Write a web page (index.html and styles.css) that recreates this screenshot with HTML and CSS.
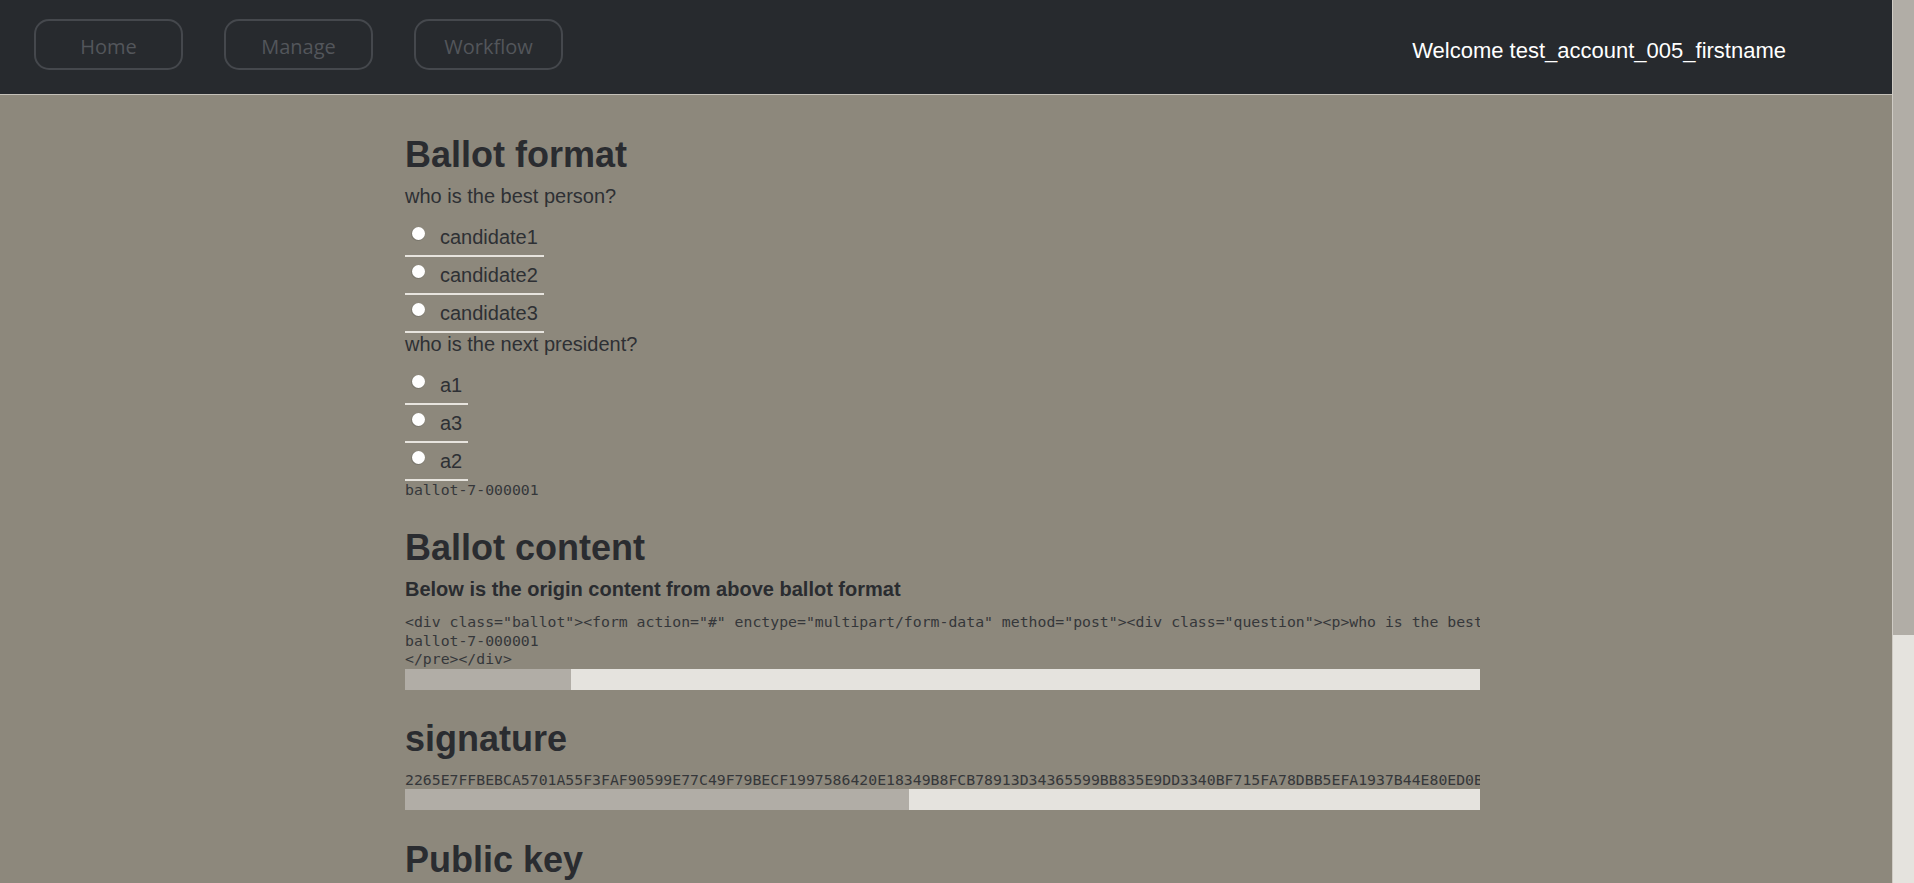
FILE: index.html
```html
<!DOCTYPE html>
<html lang="en">
<head>
<meta charset="utf-8">
<title>Ballot</title>
<link rel="stylesheet" href="styles.css">
</head>
<body>
<div class="app">
  <header class="topbar">
    <nav class="nav">
      <a class="nav-btn" href="#">Home</a>
      <a class="nav-btn" href="#">Manage</a>
      <a class="nav-btn" href="#">Workflow</a>
    </nav>
    <div class="welcome">Welcome test_account_005_firstname</div>
  </header>
  <main class="page">
    <div class="container">
      <section class="section">
        <h1 class="title title-tight">Ballot format</h1>
        <div class="question">
          <p class="q-text">who is the best person?</p>
          <label class="opt"><span class="radio"></span>candidate1</label>
          <label class="opt"><span class="radio"></span>candidate2</label>
          <label class="opt"><span class="radio"></span>candidate3</label>
        </div>
        <div class="question">
          <p class="q-text">who is the next president?</p>
          <label class="opt"><span class="radio"></span>a1</label>
          <label class="opt"><span class="radio"></span>a3</label>
          <label class="opt"><span class="radio"></span>a2</label>
        </div>
        <pre class="ballot-id">ballot-7-000001</pre>
      </section>

      <section class="section">
        <h1 class="title title-tight">Ballot content</h1>
        <h4 class="subtitle">Below is the origin content from above ballot format</h4>
        <div class="scroll-box">
          <pre class="code">&lt;div class="ballot"&gt;&lt;form action="#" enctype="multipart/form-data" method="post"&gt;&lt;div class="question"&gt;&lt;p&gt;who is the best person?&lt;/p&gt;&lt;div class="option"&gt;&lt;input type="radio" name="q1" value="candidate1"&gt;&lt;label&gt;candidate1&lt;/label&gt;&lt;/div&gt;&lt;div class="option"&gt;&lt;input type="radio" name="q1" value="candidate2"&gt;&lt;label&gt;candidate2&lt;/label&gt;&lt;/div&gt;&lt;div class="option"&gt;&lt;input type="radio" name="q1" value="candidate3"&gt;&lt;label&gt;candidate3&lt;/label&gt;&lt;/div&gt;&lt;/div&gt;&lt;div class="question"&gt;&lt;p&gt;who is the next president?&lt;/p&gt;&lt;div class="option"&gt;&lt;input type="radio" name="q2" value="a1"&gt;&lt;label&gt;a1&lt;/label&gt;&lt;/div&gt;&lt;div class="option"&gt;&lt;input type="radio" name="q2" value="a3"&gt;&lt;label&gt;a3&lt;/label&gt;&lt;/div&gt;&lt;div class="option"&gt;&lt;input type="radio" name="q2" value="a2"&gt;&lt;label&gt;a2&lt;/label&gt;&lt;/div&gt;&lt;/div&gt;&lt;/form&gt;&lt;pre class="ballot-id"&gt;
ballot-7-000001
&lt;/pre&gt;&lt;/div&gt;</pre>
          <div class="hbar"><div class="hbar-thumb" style="width: 166px"></div></div>
        </div>
      </section>

      <section class="section">
        <h1 class="title after-bar">signature</h1>
        <div class="scroll-box sig">
          <pre class="code">2265E7FFBEBCA5701A55F3FAF90599E77C49F79BECF1997586420E18349B8FCB78913D34365599BB835E9DD3340BF715FA78DBB5EFA1937B44E80ED0B7C2A91E4D58F03C6AB29E71D4058CF3B6E2A17D90C4F5E8B31A62D7F04C9E35B8A1D6E27F3C09B45A8D1E6F7230C9B4A5E81D2F6C037A9E4B15D8C2F60E3A7B9D41C58E2F6A03B7D9</pre>
          <div class="hbar"><div class="hbar-thumb" style="width: 504px"></div></div>
        </div>
      </section>

      <section class="section">
        <h1 class="title after-bar">Public key</h1>
        <div class="scroll-box sig">
          <pre class="code">-----BEGIN PUBLIC KEY-----
MIGfMA0GCSqGSIb3DQEBAQUAA4GNADCBiQKBgQDC7mYh2kq9xW1vXb3f0JtN8pZ4
Lr6aQwE5yUo3sHc1KdTg7nPzV2fMiBx0RjA9lWq4eYt8uCkS3oN5bGhJvP6aD1mF
xQ7zT2rKwL9cE0dY4sVnB8uIiH3gO6jM5pRlA1tXyZ7qWvN2eCbKfSoU9hGm0aDr
J4iT8kPzE6wQ1yL3xVnM5bOcRuH7gA2dIDAQAB
-----END PUBLIC KEY-----</pre>
        </div>
      </section>
    </div>
  </main>
</div>
<div class="vbar" aria-hidden="true"><div class="vbar-thumb"></div></div>
</body>
</html>
```

FILE: styles.css
```css
* {
  box-sizing: border-box;
}

html {
  background: #8d887c;
}

body {
  margin: 0;
  height: 100vh;
  overflow: hidden;
  display: flex;
  background: #8d887c;
  color: #2b2d31;
  font-family: "Liberation Sans", Arial, sans-serif;
}

.app {
  flex: 1;
  min-width: 0;
  overflow: hidden;
}

/* fake page scrollbar */
.vbar {
  flex: none;
  width: 22px;
  height: 100%;
  background: #e5e3de;
  border-left: 1px solid #cfcbc4;
}

.vbar-thumb {
  height: 635px;
  background: #b1ada6;
}

/* ---------- top bar ---------- */
.topbar {
  height: 95px;
  background: #272a2e;
  border-bottom: 1px solid #c4c0b8;
  display: flex;
  align-items: flex-start;
  justify-content: space-between;
  padding: 19px 106px 0 34px;
}

.nav {
  display: flex;
  gap: 41px;
}

.nav-btn {
  width: 149px;
  height: 51px;
  padding-top: 3px;
  border: 2px solid #45484d;
  border-radius: 15px;
  display: flex;
  align-items: center;
  justify-content: center;
  color: #53565b;
  font-family: "Open Sans", "Noto Sans", sans-serif;
  font-size: 20px;
  text-decoration: none;
}

.welcome {
  color: #ffffff;
  font-size: 22px;
  line-height: 25px;
  margin-top: 19px;
}

/* ---------- content ---------- */
.page {
  display: flex;
  justify-content: center;
  padding: 11px 7px 0 0;
}

.container {
  width: 1075px;
}

.title {
  font-size: 36px;
  line-height: 1.1;
  font-weight: bold;
  margin: 27px 0 12px;
  color: #2a2c30;
}

.title-tight {
  margin-top: 28.5px;
  margin-bottom: 10.5px;
}

.after-bar {
  margin-top: 29.5px;
}

.subtitle {
  font-size: 20px;
  line-height: 22px;
  font-weight: bold;
  margin: 0 0 13.5px;
  color: #2a2c30;
}

.q-text {
  font-size: 20px;
  line-height: 22px;
  margin: 0 0 12px;
  color: #2e3034;
}

.opt {
  display: block;
  width: fit-content;
  padding: 6px;
  border-bottom: 2px solid #e7e4de;
  font-size: 20px;
  line-height: 24px;
  color: #2e3034;
}

.radio {
  display: inline-block;
  width: 13px;
  height: 13px;
  border-radius: 50%;
  background: #ffffff;
  box-shadow: -0.5px 0.5px 0 0.5px rgba(90, 88, 84, 0.35);
  margin: 0 15.5px 0 0.5px;
  vertical-align: 3.5px;
}

pre {
  font-family: "DejaVu Sans Mono", "Liberation Mono", monospace;
  font-size: 14.8px;
  line-height: 18.5px;
  margin: 0;
  color: #35373a;
}

.scroll-box {
  width: 100%;
}

.code {
  overflow: hidden;
  white-space: pre;
}

.sig {
  margin-top: 2px;
}

/* fake horizontal scrollbars */
.hbar {
  height: 21px;
  background: #e5e3de;
}

.hbar-thumb {
  height: 100%;
  background: #b1ada6;
}
```
